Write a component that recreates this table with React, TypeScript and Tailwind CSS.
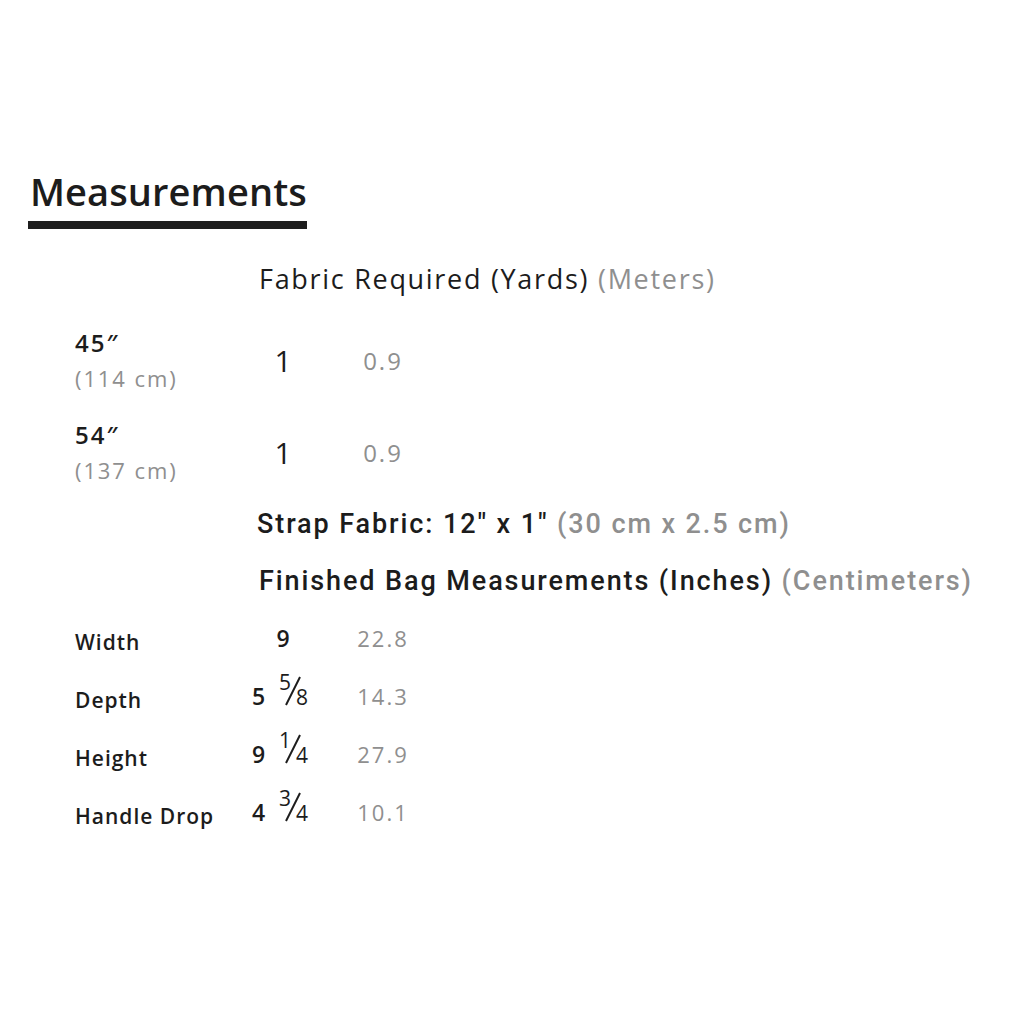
import React from "react";

const sans = { fontFamily: '"Open Sans", "Liberation Sans", sans-serif' };
const narrow = { fontFamily: 'Roboto, "Liberation Sans", sans-serif' };

function Frac({ n, d }: { n: string; d: string }) {
  return (
    <span className="relative inline-block w-[36px] h-[30px] -translate-y-[5px] ml-[13px]">
      <span className="absolute left-[1px] top-[-4px] text-[21px] leading-[21px] font-medium">{n}</span>
      <svg className="absolute left-0 top-0" width="36" height="30" viewBox="0 0 36 30">
        <line x1="22" y1="1" x2="8" y2="29" stroke="#1c1c1c" strokeWidth="2" />
      </svg>
      <span className="absolute left-[18px] top-[11px] text-[21px] leading-[21px] font-medium">{d}</span>
    </span>
  );
}

function FabricRow({ width, cm, yd, m }: { width: string; cm: string; yd: string; m: string }) {
  return (
    <div className="flex items-center h-[61px] pl-[75px]">
      <div className="w-[158px] flex flex-col gap-[9px]">
        <div className="h-[26px] text-[24px] leading-[26px] font-semibold tracking-[2px] text-[#1c1c1c]">{width}</div>
        <div className="h-[26px] text-[22px] leading-[26px] tracking-[1.9px] text-[#8f8f8f]">{cm}</div>
      </div>
      <div className="w-[100px] text-center text-[30px] leading-[34px] text-[#1c1c1c]">{yd}</div>
      <div className="w-[100px] text-center text-[24px] leading-[30px] tracking-[2px] text-[#8f8f8f]">{m}</div>
    </div>
  );
}

function BagRow({ label, whole, frac, cm }: { label: string; whole: string; frac?: [string, string]; cm: string }) {
  return (
    <div className="flex items-center h-[58px] pl-[75px]">
      <div className="w-[158px] mt-[7px] text-[21px] leading-[28px] font-semibold tracking-[1px] text-[#1c1c1c]">{label}</div>
      <div className="w-[100px] flex items-center justify-center text-[23px] leading-[28px] font-semibold text-[#1c1c1c]">
        <span>{whole}</span>
        {frac ? <Frac n={frac[0]} d={frac[1]} /> : null}
      </div>
      <div className="w-[100px] text-center text-[22px] leading-[28px] tracking-[2px] text-[#8f8f8f]">{cm}</div>
    </div>
  );
}

export default function App() {
  return (
    <div className="w-[1024px] h-[1024px] bg-white text-[#1c1c1c]" style={sans}>
      <div className="pt-[171px] pl-[28px]">
        <div className="h-[40px] pl-[2px] text-[38px] leading-[40px] font-semibold tracking-[0.1px]">Measurements</div>
        <div className="w-[279px] h-[8px] bg-[#1e1e1e] mt-[10px]"></div>
      </div>
      <div className="mt-[35px] pl-[259px] h-[30px] text-[27px] leading-[30px] font-medium tracking-[1.7px]">
        Fabric Required (Yards) <span className="text-[#8f8f8f]">(Meters)</span>
      </div>
      <div className="mt-[36px] flex flex-col gap-[31px]">
        <FabricRow width="45″" cm="(114 cm)" yd="1" m="0.9" />
        <FabricRow width="54″" cm="(137 cm)" yd="1" m="0.9" />
      </div>
      <div className="mt-[26px] pl-[257px] h-[30px] text-[27px] leading-[30px] font-medium tracking-[1.9px]" style={narrow}>
        Strap Fabric: 12″ x 1″ <span className="text-[#8f8f8f]">(30 cm x 2.5 cm)</span>
      </div>
      <div className="mt-[27px] pl-[259px] h-[30px] text-[27px] leading-[30px] font-medium tracking-[1.9px]" style={narrow}>
        Finished Bag Measurements (Inches) <span className="text-[#8f8f8f]">(Centimeters)</span>
      </div>
      <div className="mt-[13px]">
        <BagRow label="Width" whole="9" cm="22.8" />
        <BagRow label="Depth" whole="5" frac={["5", "8"]} cm="14.3" />
        <BagRow label="Height" whole="9" frac={["1", "4"]} cm="27.9" />
        <BagRow label="Handle Drop" whole="4" frac={["3", "4"]} cm="10.1" />
      </div>
    </div>
  );
}
